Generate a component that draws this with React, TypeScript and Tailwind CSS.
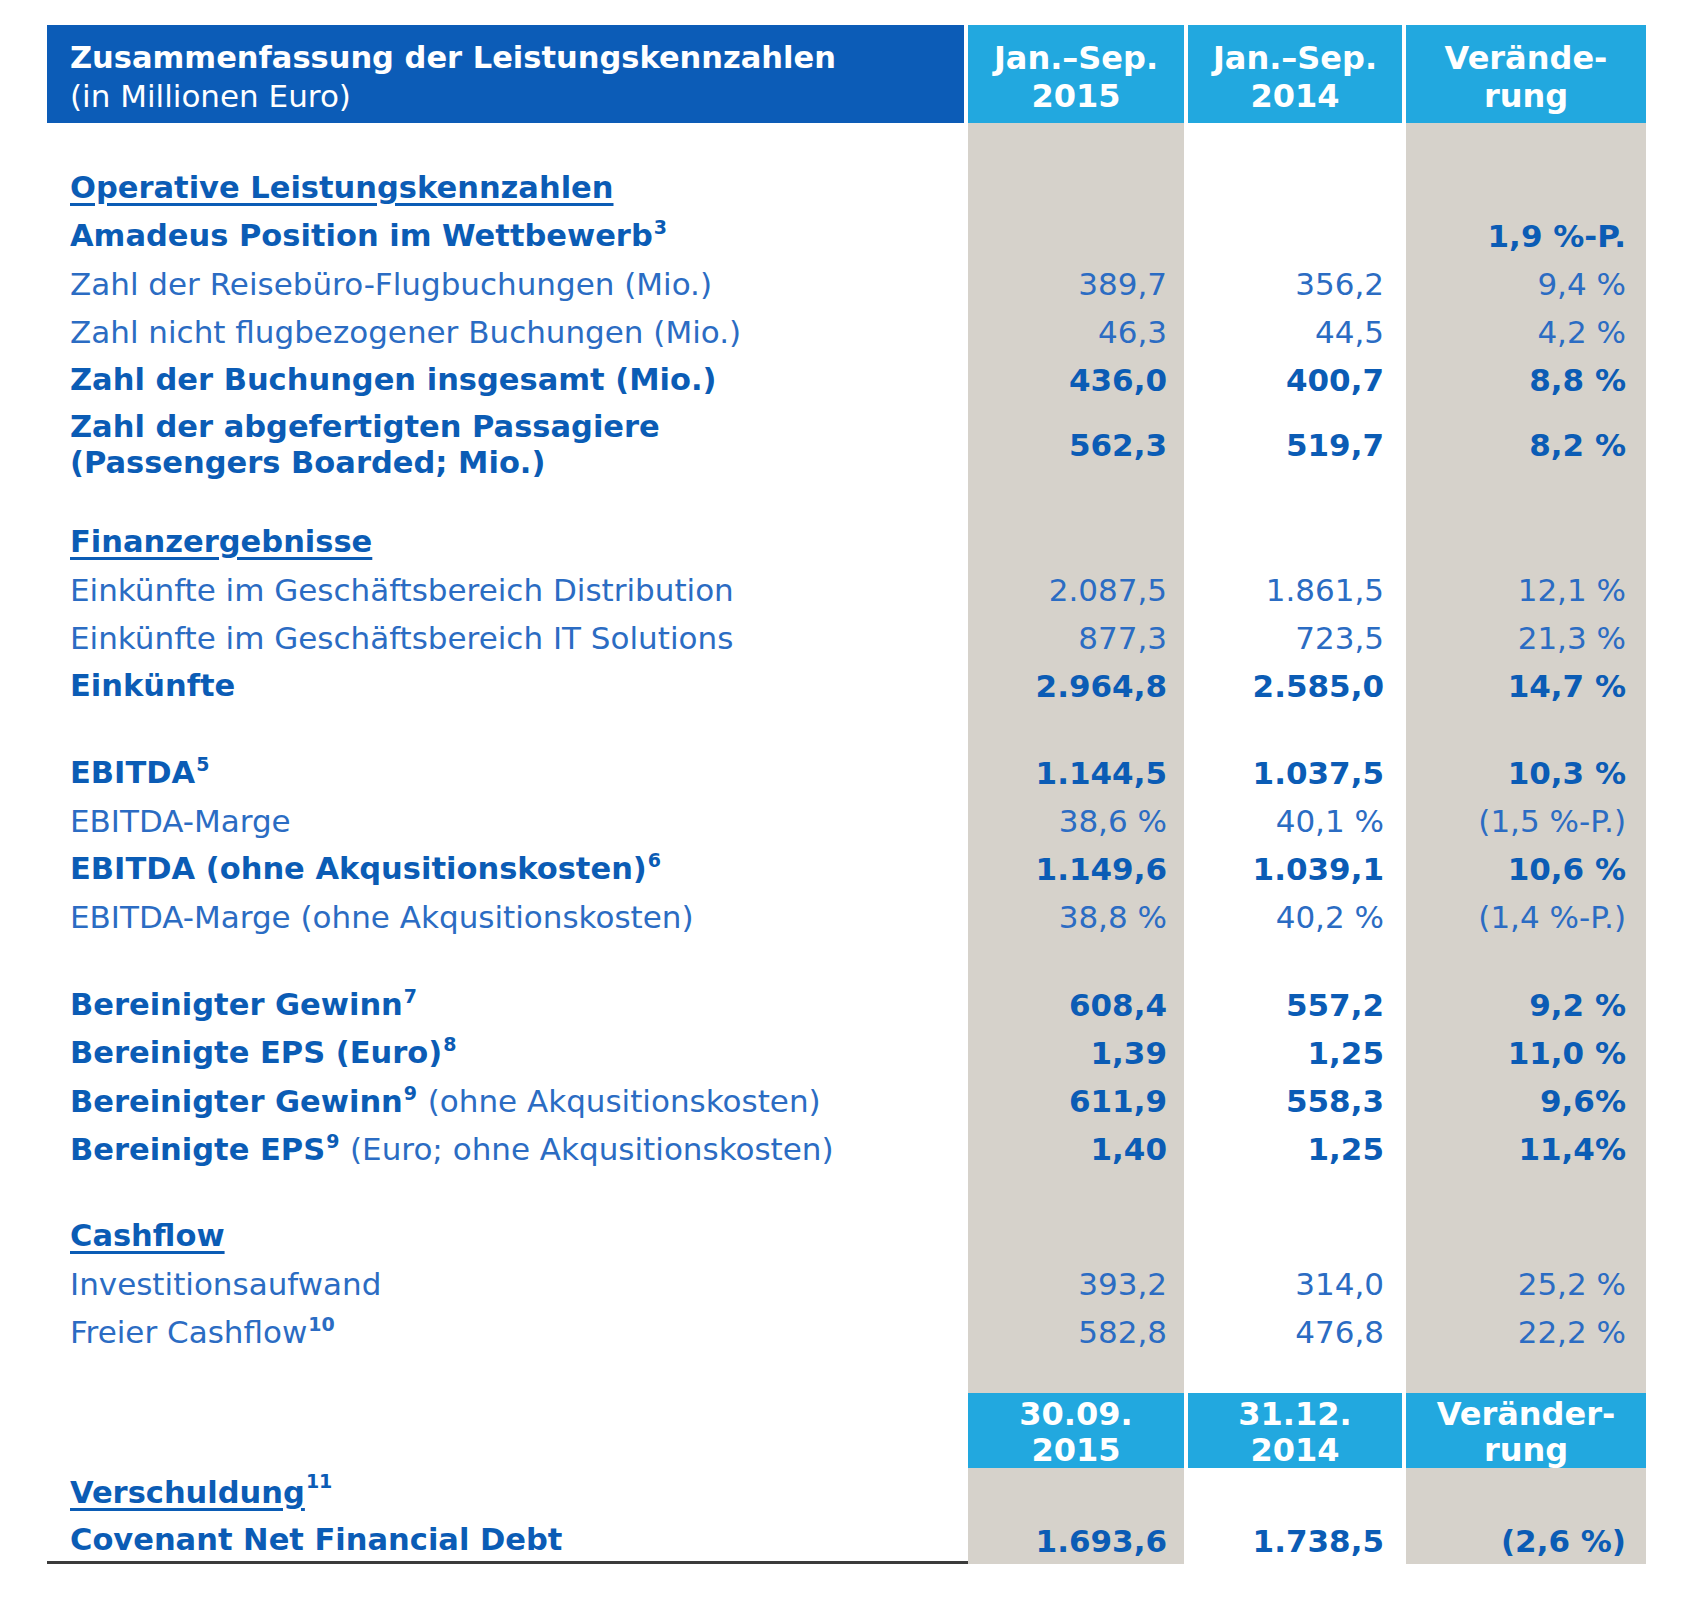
import type { ReactNode } from 'react'

type Row =
  | { kind: 'spacer'; h: string }
  | { kind: 'section'; label: string; sup?: string; h: string }
  | { kind: 'data'; label: ReactNode; bold: boolean; values: [string, string, string]; h: string }
  | { kind: 'subhead'; cols: [string, string][]; h: string }

function Sup({ children }: { children: ReactNode }) {
  return <span className="relative -top-[12px] ml-[1px] text-[19px] font-bold leading-none">{children}</span>
}

const rows: Row[] = [
  { kind: 'spacer', h: 'h-[40px]' },
  { kind: 'section', label: 'Operative Leistungskennzahlen', h: 'h-[48px]' },
  {
    kind: 'data',
    bold: true,
    label: (
      <>
        Amadeus Position im Wettbewerb<Sup>3</Sup>
      </>
    ),
    values: ['', '', '1,9 %-P.'],
    h: 'h-[48px]',
  },
  { kind: 'data', bold: false, label: 'Zahl der Reisebüro-Flugbuchungen (Mio.)', values: ['389,7', '356,2', '9,4 %'], h: 'h-[48px]' },
  { kind: 'data', bold: false, label: 'Zahl nicht flugbezogener Buchungen (Mio.)', values: ['46,3', '44,5', '4,2 %'], h: 'h-[48px]' },
  { kind: 'data', bold: true, label: 'Zahl der Buchungen insgesamt (Mio.)', values: ['436,0', '400,7', '8,8 %'], h: 'h-[48px]' },
  {
    kind: 'data',
    bold: true,
    label: (
      <>
        Zahl der abgefertigten Passagiere
        <br />
        (Passengers Boarded; Mio.)
      </>
    ),
    values: ['562,3', '519,7', '8,2 %'],
    h: 'h-[82px]',
  },
  { kind: 'spacer', h: 'h-[32px]' },
  { kind: 'section', label: 'Finanzergebnisse', h: 'h-[48px]' },
  { kind: 'data', bold: false, label: 'Einkünfte im Geschäftsbereich Distribution', values: ['2.087,5', '1.861,5', '12,1 %'], h: 'h-[48px]' },
  { kind: 'data', bold: false, label: 'Einkünfte im Geschäftsbereich IT Solutions', values: ['877,3', '723,5', '21,3 %'], h: 'h-[48px]' },
  { kind: 'data', bold: true, label: 'Einkünfte', values: ['2.964,8', '2.585,0', '14,7 %'], h: 'h-[48px]' },
  { kind: 'spacer', h: 'h-[39px]' },
  {
    kind: 'data',
    bold: true,
    label: (
      <>
        EBITDA<Sup>5</Sup>
      </>
    ),
    values: ['1.144,5', '1.037,5', '10,3 %'],
    h: 'h-[48px]',
  },
  { kind: 'data', bold: false, label: 'EBITDA-Marge', values: ['38,6 %', '40,1 %', '(1,5 %-P.)'], h: 'h-[48px]' },
  {
    kind: 'data',
    bold: true,
    label: (
      <>
        EBITDA (ohne Akqusitionskosten)<Sup>6</Sup>
      </>
    ),
    values: ['1.149,6', '1.039,1', '10,6 %'],
    h: 'h-[48px]',
  },
  { kind: 'data', bold: false, label: 'EBITDA-Marge (ohne Akqusitionskosten)', values: ['38,8 %', '40,2 %', '(1,4 %-P.)'], h: 'h-[48px]' },
  { kind: 'spacer', h: 'h-[40px]' },
  {
    kind: 'data',
    bold: true,
    label: (
      <>
        Bereinigter Gewinn<Sup>7</Sup>
      </>
    ),
    values: ['608,4', '557,2', '9,2 %'],
    h: 'h-[48px]',
  },
  {
    kind: 'data',
    bold: true,
    label: (
      <>
        Bereinigte EPS (Euro)<Sup>8</Sup>
      </>
    ),
    values: ['1,39', '1,25', '11,0 %'],
    h: 'h-[48px]',
  },
  {
    kind: 'data',
    bold: true,
    label: (
      <>
        Bereinigter Gewinn<Sup>9</Sup>{' '}
        <span className="text-[31px] font-normal text-[#2b6cc3]">(ohne Akqusitionskosten)</span>
      </>
    ),
    values: ['611,9', '558,3', '9,6%'],
    h: 'h-[48px]',
  },
  {
    kind: 'data',
    bold: true,
    label: (
      <>
        Bereinigte EPS<Sup>9</Sup>{' '}
        <span className="text-[31px] font-normal text-[#2b6cc3]">(Euro; ohne Akqusitionskosten)</span>
      </>
    ),
    values: ['1,40', '1,25', '11,4%'],
    h: 'h-[48px]',
  },
  { kind: 'spacer', h: 'h-[39px]' },
  { kind: 'section', label: 'Cashflow', h: 'h-[48px]' },
  { kind: 'data', bold: false, label: 'Investitionsaufwand', values: ['393,2', '314,0', '25,2 %'], h: 'h-[48px]' },
  {
    kind: 'data',
    bold: false,
    label: (
      <>
        Freier Cashflow<Sup>10</Sup>
      </>
    ),
    values: ['582,8', '476,8', '22,2 %'],
    h: 'h-[48px]',
  },
  { kind: 'spacer', h: 'h-[38px]' },
  {
    kind: 'subhead',
    cols: [
      ['30.09.', '2015'],
      ['31.12.', '2014'],
      ['Veränder-', 'rung'],
    ],
    h: 'h-[75px]',
  },
  { kind: 'section', label: 'Verschuldung', sup: '11', h: 'h-[48px]' },
  { kind: 'data', bold: true, label: 'Covenant Net Financial Debt', values: ['1.693,6', '1.738,5', '(2,6 %)'], h: 'h-[48px]' },
]

function TableRow({ row, last }: { row: Row; last: boolean }) {
  const labelBase = last ? 'border-b-[3px] border-[#3b3b3b] -mr-[4px]' : ''
  if (row.kind === 'spacer') {
    return (
      <>
        <div className={`${row.h} ${labelBase}`} />
        <div className={`${row.h} bg-[#d6d2cb]`} />
        <div className={row.h} />
        <div className={`${row.h} bg-[#d6d2cb]`} />
      </>
    )
  }
  if (row.kind === 'subhead') {
    return (
      <>
        <div className={row.h} />
        {row.cols.map(([a, b]) => (
          <div
            key={a}
            className={`${row.h} flex flex-col items-center justify-center bg-[#22a8df] pt-[2px] text-center text-[32px] font-bold leading-[36px] text-white`}
          >
            <span>{a}</span>
            <span>{b}</span>
          </div>
        ))}
      </>
    )
  }
  if (row.kind === 'section') {
    return (
      <>
        <div className={`${row.h} ${labelBase} flex items-center pl-[23px] pt-[2px] text-[30.5px] font-bold text-[#0b5cb5]`}>
          <span className="underline decoration-[3px] underline-offset-[5px]">{row.label}</span>
          {row.sup && <Sup>{row.sup}</Sup>}
        </div>
        <div className={`${row.h} bg-[#d6d2cb]`} />
        <div className={row.h} />
        <div className={`${row.h} bg-[#d6d2cb]`} />
      </>
    )
  }
  const tone = row.bold ? 'font-bold text-[#0b5cb5]' : 'font-normal text-[#2b6cc3]'
  const labelSize = row.bold ? 'text-[30.5px]' : 'text-[31px]'
  return (
    <>
      <div className={`${row.h} ${labelBase} ${tone} ${labelSize} flex items-center whitespace-nowrap pl-[23px] pt-[2px] leading-[36px]`}>
        <div>{row.label}</div>
      </div>
      <div className={`${row.h} ${tone} flex items-center justify-end bg-[#d6d2cb] pr-[17px] pt-[2px] text-[31px]`}>{row.values[0]}</div>
      <div className={`${row.h} ${tone} flex items-center justify-end pr-[18px] pt-[2px] text-[31px]`}>{row.values[1]}</div>
      <div className={`${row.h} ${tone} flex items-center justify-end bg-[#d6d2cb] pr-[20px] pt-[2px] text-[31px]`}>{row.values[2]}</div>
    </>
  )
}

export default function App() {
  return (
    <div className="min-h-[1608px] w-[1694px] bg-white pl-[47px] pt-[25px] font-['DejaVu_Sans',sans-serif]">
      <div className="grid grid-cols-[917px_216px_214px_240px] gap-x-[4px]">
        <div className="flex h-[98px] flex-col justify-center bg-[#0c5cb7] pl-[23px] pt-[6px] leading-[38px] text-white">
          <span className="text-[30.5px] font-bold">Zusammenfassung der Leistungskennzahlen</span>
          <span className="text-[31px]">(in Millionen Euro)</span>
        </div>
        {[
          ['Jan.–Sep.', '2015'],
          ['Jan.–Sep.', '2014'],
          ['Verände-', 'rung'],
        ].map(([a, b], i) => (
          <div
            key={i}
            className="flex h-[98px] flex-col items-center justify-center bg-[#22a8df] pt-[6px] text-center text-[32px] font-bold leading-[38px] text-white"
          >
            <span>{a}</span>
            <span>{b}</span>
          </div>
        ))}
        {rows.map((row, i) => (
          <TableRow key={i} row={row} last={i === rows.length - 1} />
        ))}
      </div>
    </div>
  )
}
